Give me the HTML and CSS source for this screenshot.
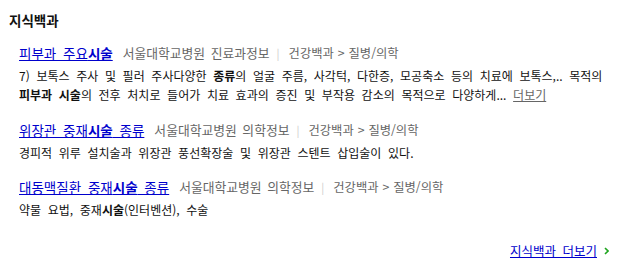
FILE: index.html
```html
<!DOCTYPE html>
<html lang="ko">
<head>
<meta charset="utf-8">
<link rel="stylesheet" href="styles.css">
</head>
<body>
<section class="kin">
  <h2 class="kin-title">지식백과</h2>
  <ul class="kin-list">
    <li class="kin-item">
      <div class="kin-head">
        <a class="kin-link" href="#">피부과 주요<b>시술</b></a>
        <span class="kin-src">서울대학교병원 진료과정보</span>
        <span class="kin-bar">|</span>
        <span class="kin-cat">건강백과 &gt; 질병/의학</span>
      </div>
      <p class="kin-desc">7) 보톡스 주사 및 필러 주사다양한 <b>종류</b>의 얼굴 주름, 사각턱, 다한증, 모공축소 등의 치료에 보톡스,.. 목적의 <b>피부과 시술</b>의 전후 처치로 들어가 치료 효과의 증진 및 부작용 감소의 목적으로 다양하게... <a class="kin-more" href="#">더보기</a></p>
    </li>
    <li class="kin-item">
      <div class="kin-head">
        <a class="kin-link" href="#">위장관 중재<b>시술</b> 종류</a>
        <span class="kin-src">서울대학교병원 의학정보</span>
        <span class="kin-bar">|</span>
        <span class="kin-cat">건강백과 &gt; 질병/의학</span>
      </div>
      <p class="kin-desc">경피적 위루 설치술과 위장관 풍선확장술 및 위장관 스텐트 삽입술이 있다.</p>
    </li>
    <li class="kin-item">
      <div class="kin-head">
        <a class="kin-link" href="#">대동맥질환 중재<b>시술</b> 종류</a>
        <span class="kin-src">서울대학교병원 의학정보</span>
        <span class="kin-bar">|</span>
        <span class="kin-cat">건강백과 &gt; 질병/의학</span>
      </div>
      <p class="kin-desc">약물 요법, 중재<b>시술</b>(인터벤션), 수술</p>
    </li>
  </ul>
  <div class="kin-foot">
    <a class="kin-all" href="#">지식백과 더보기</a>
    <svg class="kin-arrow" width="5" height="8" viewBox="0 0 5 8"><path d="M1 1 L4 4 L1 7" fill="none" stroke="#1fa51f" stroke-width="1.6"/></svg>
  </div>
</section>
</body>
</html>
```

FILE: styles.css
```css
html, body {
  margin: 0;
  padding: 0;
  background: #fff;
}
body {
  font-family: "Noto Sans CJK KR", "Noto Sans", sans-serif;
  font-size: 12px;
  color: #111;
}
.kin {
  width: 622px;
  height: 268px;
  box-sizing: border-box;
  padding: 11px 10px 0 9px;
}
.kin-title {
  margin: 0;
  height: 18px;
  font-size: 13.5px;
  font-weight: bold;
  color: #111;
  line-height: 18px;
}
.kin-list {
  list-style: none;
  margin: 0;
  padding: 0 0 0 10px;
}
.kin-item {
  margin-top: 15px;
}
.kin-item + .kin-item {
  margin-top: 17px;
}
.kin-item:last-child {
  margin-top: 16px;
}
.kin-head {
  display: flex;
  align-items: center;
  height: 18px;
  line-height: 18px;
  white-space: nowrap;
}
.kin-link {
  color: #0000cc;
  text-decoration: underline;
  font-size: 13.5px;
  word-spacing: 3px;
  margin-right: 10px;
}
.kin-link b {
  font-weight: bold;
}
.kin-src {
  color: #666;
  font-size: 12.8px;
  word-spacing: 2px;
}
.kin-cat {
  color: #666;
  font-size: 12.3px;
  word-spacing: 0.5px;
}
.kin-bar {
  color: #ccc;
  font-size: 11px;
  margin: 0 9px 0 7px;
}
.kin-desc {
  margin: 4px 0 0 0;
  line-height: 19px;
  color: #111;
  word-spacing: 3.3px;
}
.kin-desc b {
  font-weight: bold;
}
.kin-more {
  color: #666;
  text-decoration: underline;
}
.kin-foot {
  display: flex;
  justify-content: flex-end;
  align-items: center;
  gap: 7px;
  height: 18px;
  margin-top: 23px;
  padding-right: 3px;
}
.kin-all {
  color: #0000cc;
  text-decoration: underline;
  font-size: 12.5px;
  line-height: 18px;
  word-spacing: 3px;
}
.kin-arrow {
  display: block;
}
```
